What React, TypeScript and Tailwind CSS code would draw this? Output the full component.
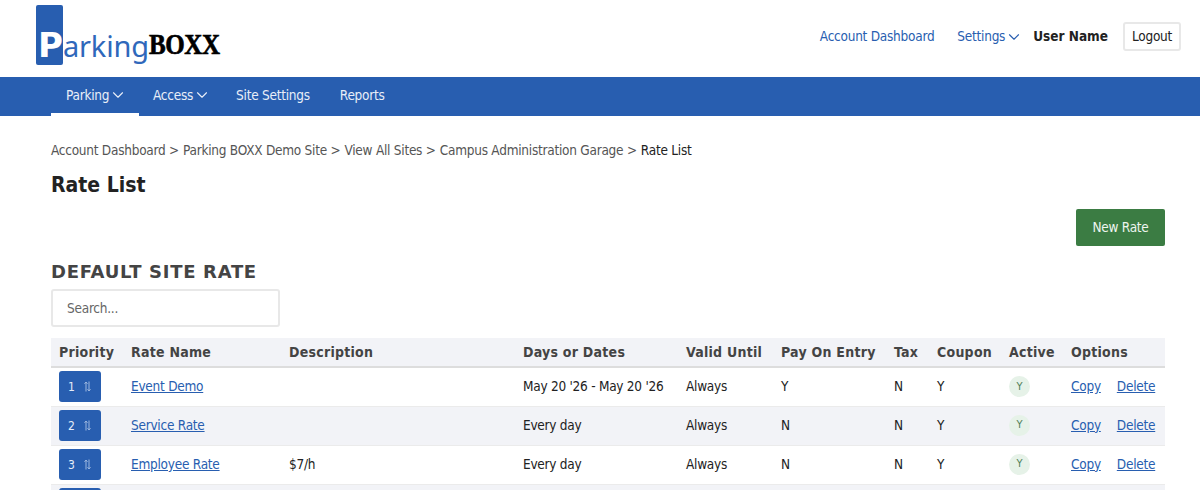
import React from 'react';
import { ChevronDown } from 'lucide-react';

const rates = [
    { id: 1, name: 'Event Demo', description: '', days: "May 20 '26 - May 20 '26", pay: 'Y' },
    { id: 2, name: 'Service Rate', description: '', days: 'Every day', pay: 'N' },
    { id: 3, name: 'Employee Rate', description: '$7/h', days: 'Every day', pay: 'N' },
    { id: 4, name: 'Visitor Rate', description: '', days: 'Every day', pay: 'N' },
];

const crumbs = ['Account Dashboard', 'Parking BOXX Demo Site', 'View All Sites', 'Campus Administration Garage'];

function SortIcon() {
    return (
        <svg width="7" height="11" viewBox="0 0 7 11" fill="none" stroke="#9db8e0" strokeWidth="1">
            <path d="M2 10.5V1M0.5 2.8L2 1L3.5 2.8" />
            <path d="M5 0.5V10M3.5 8.2L5 10L6.5 8.2" />
        </svg>
    );
}

function Logo() {
    return (
        <div className="relative w-[184px] h-[66px] ml-[36px] mt-[5px] shrink-0 tracking-normal">
            <div className="absolute left-0 top-0 w-[27px] h-[60px] bg-[#285eb0] rounded-[2px]" />
            <span className="absolute left-[2px] top-[23px] text-[34px] leading-[34px] font-bold text-white font-['DejaVu_Sans',sans-serif]">P</span>
            <span className="absolute left-[27px] top-[23px] text-[29px] leading-[36px] text-[#2f68bb] font-['Noto_Sans',sans-serif] tracking-[-0.2px]">arking</span>
            <span className="absolute left-[113px] top-[25px] text-[25px] leading-[34px] font-black text-black font-['Liberation_Serif',serif] tracking-[-0.4px] scale-y-[1.15] origin-bottom [-webkit-text-stroke:0.6px_black]">BOXX</span>
        </div>
    );
}

export default function App() {
    return (
        <div className="h-[490px] overflow-hidden bg-white text-[#222222] font-['DejaVu_Sans_Condensed','DejaVu_Sans',sans-serif] text-[13.5px] tracking-[-0.25px]">
            {/* Top bar */}
            <div className="h-[77px] flex justify-between">
                <Logo />
                <div className="flex items-center pr-[19px] pb-[4px]">
                    <a className="text-[#285eb0] mr-[23px]">Account Dashboard</a>
                    <a className="text-[#285eb0] flex items-center mr-[10px]">
                        Settings
                        <ChevronDown size={18} strokeWidth={1.5} />
                    </a>
                    <span className="font-bold text-[13.5px] tracking-normal mr-[15px]">User Name</span>
                    <button className="w-[58px] h-[29px] border-2 border-[#e8e8e8] rounded-[3px]">Logout</button>
                </div>
            </div>

            {/* Main nav */}
            <div className="h-[39px] bg-[#285eb0] flex pl-[51px] text-[#e8eef8]">
                <a className="flex items-center w-[88px] pl-[15px] border-b-[3px] border-white">
                    Parking
                    <ChevronDown size={18} strokeWidth={1.5} />
                </a>
                <a className="flex items-center ml-[14px] mr-[25px] pb-[3px]">
                    Access
                    <ChevronDown size={18} strokeWidth={1.5} />
                </a>
                <a className="flex items-center mr-[30px] pb-[3px]">Site Settings</a>
                <a className="flex items-center pb-[3px]">Reports</a>
            </div>

            <div className="px-[51px] pr-[35px]">
                {/* Breadcrumb */}
                <div className="pt-[24px] h-[55px] text-[#555555] flex gap-[4px]">
                    {crumbs.map((c) => (
                        <span key={c}>{c} &gt;</span>
                    ))}
                    <span className="text-[#222222]">Rate List</span>
                </div>

                <h1 className="text-[21px] leading-[28px] font-bold tracking-normal h-[38px]">Rate List</h1>

                <div className="flex justify-end">
                    <button className="w-[89px] h-[37px] bg-[#3b7c43] text-[#eef5ef] rounded-[2px]">New Rate</button>
                </div>

                <h2 className="mt-[14px] text-[18px] leading-[24px] font-bold font-['DejaVu_Sans',sans-serif] tracking-[0.7px] text-[#444444]">DEFAULT SITE RATE</h2>

                <input
                    placeholder="Search..."
                    className="mt-[5px] block w-[229px] h-[38px] px-[14px] border-2 border-[#e8e8e8] rounded-[3px] placeholder:text-[#666666]"
                />

                {/* Rates table */}
                <table className="mt-[11px] w-[1114px] table-fixed border-collapse">
                    <thead>
                        <tr className="h-[29px] bg-[#f2f3f7] border-b-2 border-[#dddddd] text-left text-[#444444] text-[14px] tracking-[0.25px]">
                            <th className="w-[80px] pl-[8px] font-bold">Priority</th>
                            <th className="w-[158px] font-bold">Rate Name</th>
                            <th className="w-[234px] font-bold">Description</th>
                            <th className="w-[163px] font-bold">Days or Dates</th>
                            <th className="w-[95px] font-bold">Valid Until</th>
                            <th className="w-[113px] font-bold">Pay On Entry</th>
                            <th className="w-[43px] font-bold">Tax</th>
                            <th className="w-[72px] font-bold">Coupon</th>
                            <th className="w-[62px] font-bold">Active</th>
                            <th className="font-bold">Options</th>
                        </tr>
                    </thead>
                    <tbody>
                        {rates.map((r, i) => (
                            <tr key={r.id} className={`h-[39px] border-b border-[#ebebeb] ${i % 2 === 1 ? 'bg-[#f2f3f7]' : 'bg-white'}`}>
                                <td className="pl-[8px]">
                                    <button className="w-[42px] h-[31px] bg-[#285eb0] rounded-[3px] text-[#e6edf8] text-[12px] tracking-normal flex items-center pl-[9px] gap-[9px]">
                                        {r.id}
                                        <SortIcon />
                                    </button>
                                </td>
                                <td className="pb-[1px]"><a className="text-[#285eb0] underline">{r.name}</a></td>
                                <td className="pb-[1px]">{r.description}</td>
                                <td className="pb-[1px]">{r.days}</td>
                                <td className="pb-[1px]">Always</td>
                                <td className="pb-[1px]">{r.pay}</td>
                                <td className="pb-[1px]">N</td>
                                <td className="pb-[1px]">Y</td>
                                <td>
                                    <span className="w-[21px] h-[21px] rounded-full bg-[#e6f2e8] text-[#4f7f58] text-[11px] flex items-center justify-center">Y</span>
                                </td>
                                <td className="pb-[1px]">
                                    <a className="text-[#285eb0] underline mr-[16px]">Copy</a>
                                    <a className="text-[#285eb0] underline">Delete</a>
                                </td>
                            </tr>
                        ))}
                    </tbody>
                </table>
            </div>
        </div>
    );
}
